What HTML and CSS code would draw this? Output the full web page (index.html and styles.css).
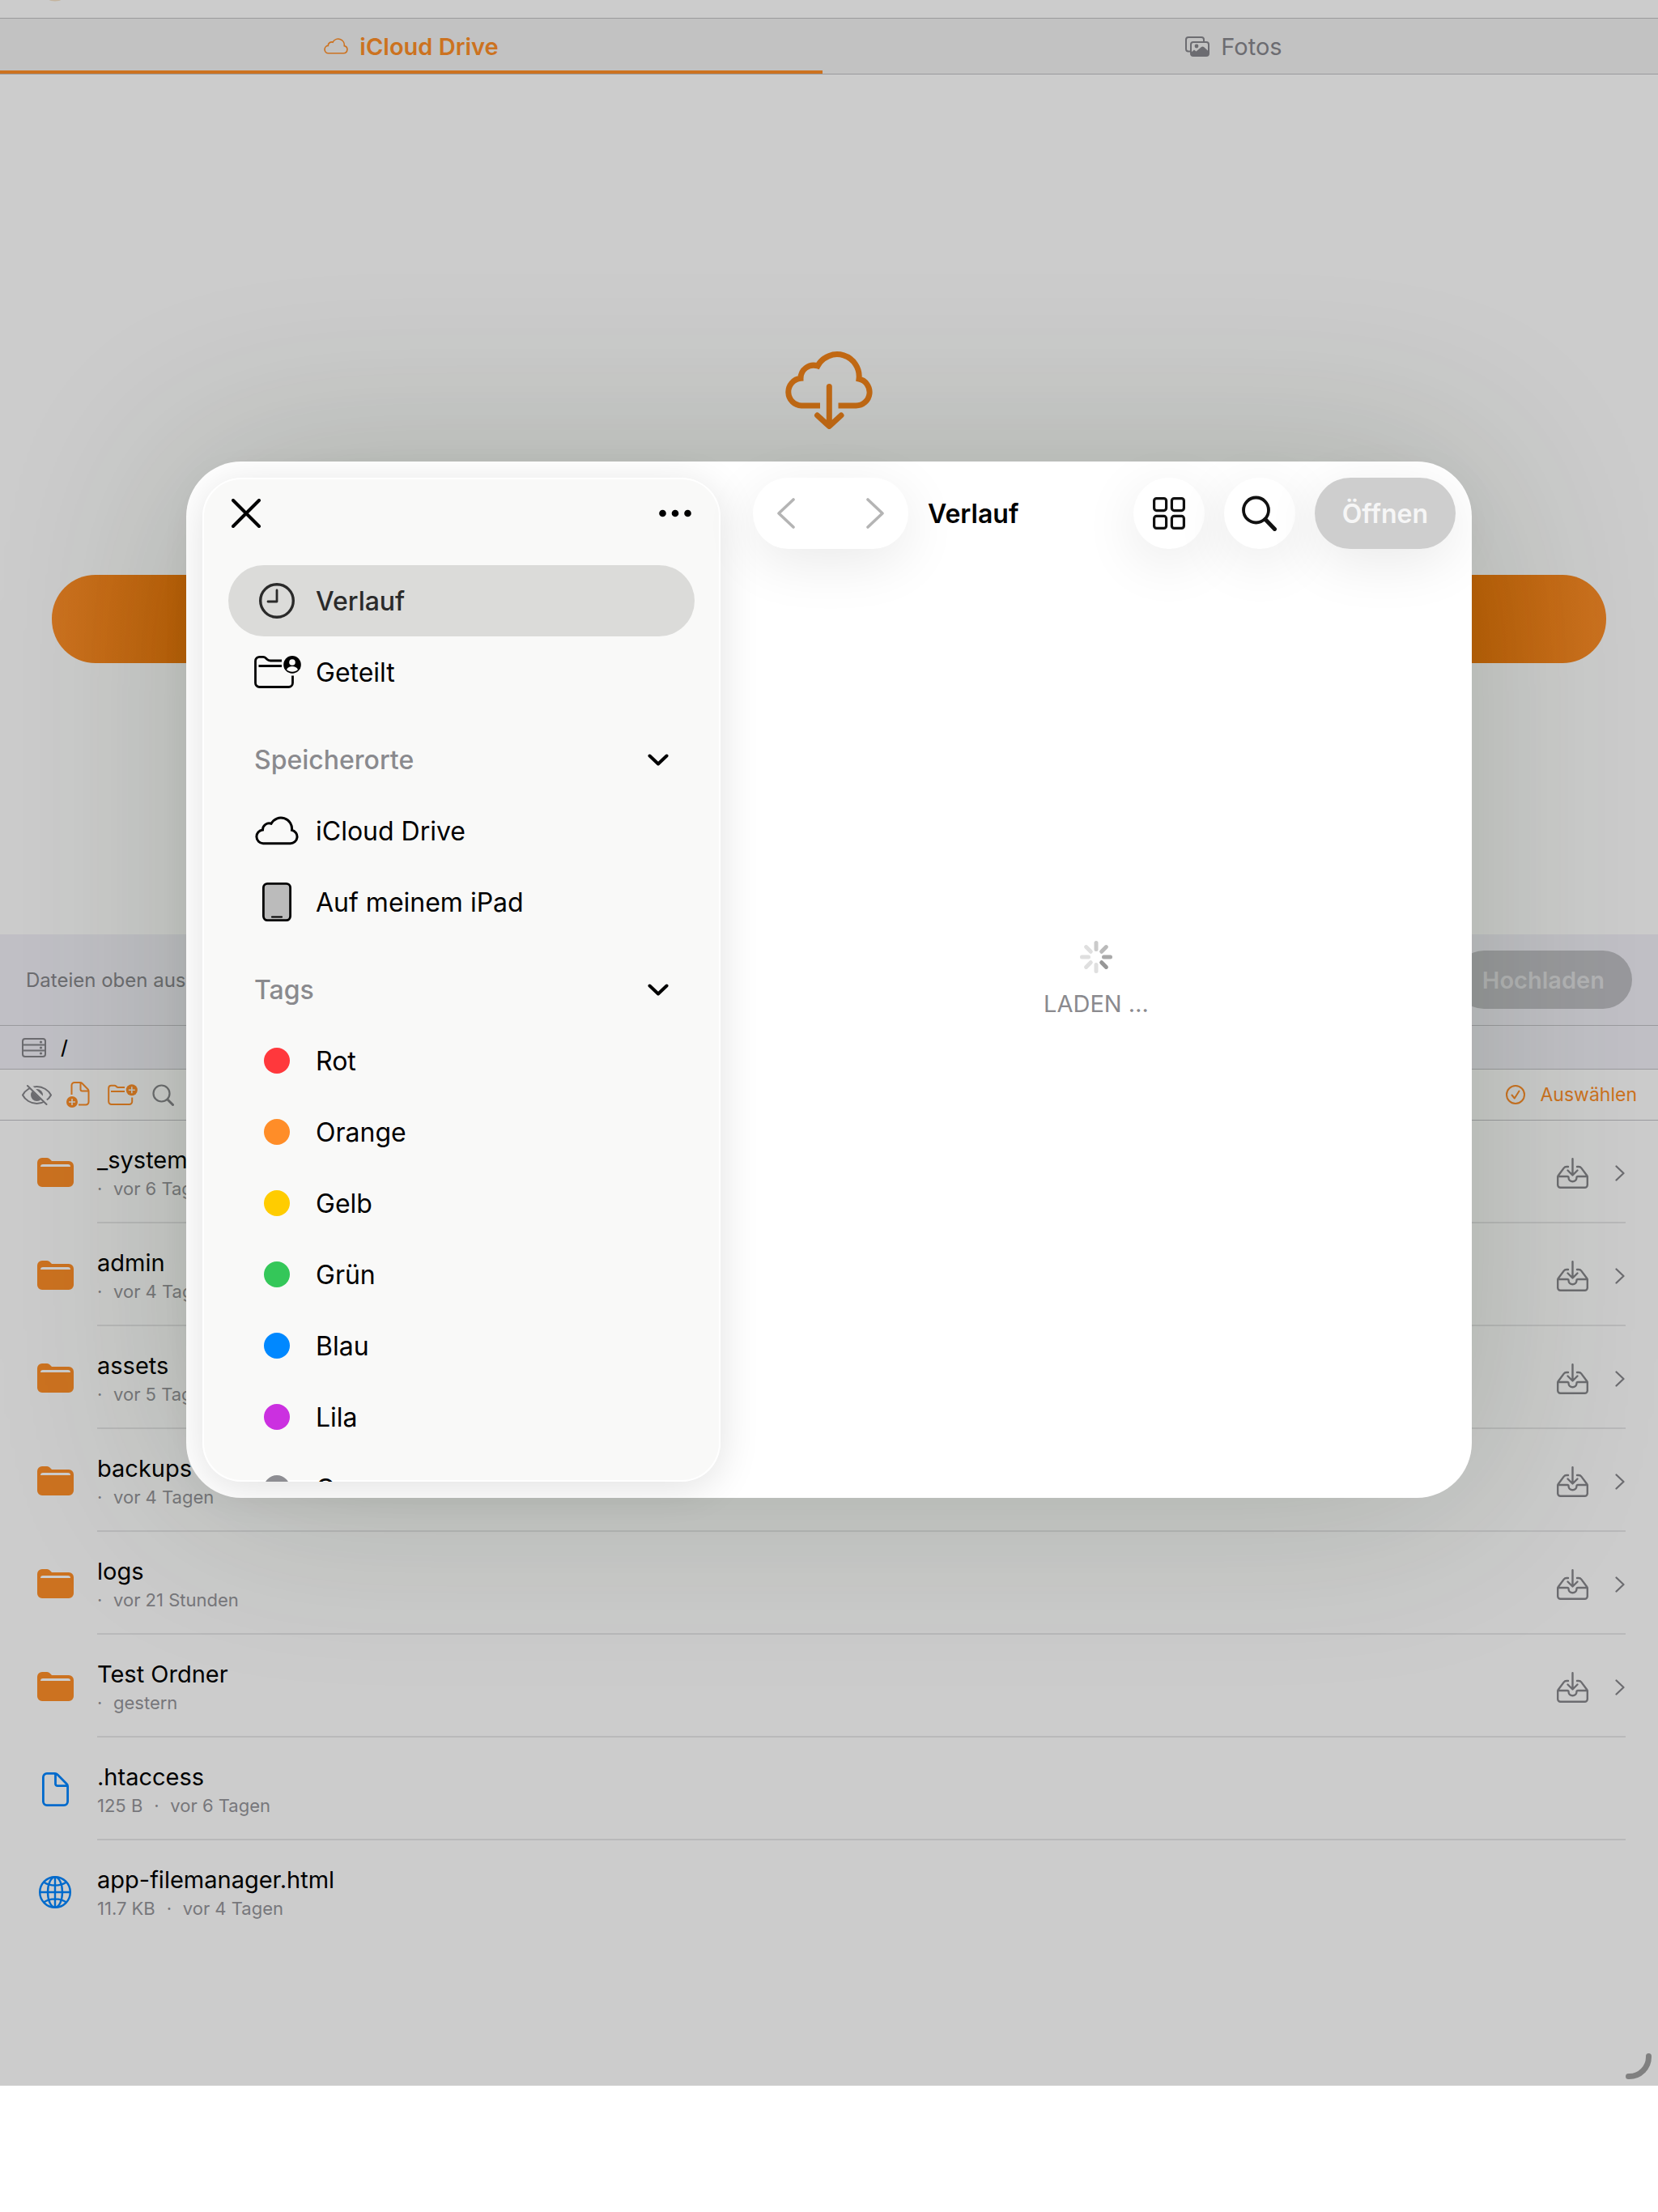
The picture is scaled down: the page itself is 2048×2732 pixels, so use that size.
FILE: index.html
```html
<!DOCTYPE html>
<html lang="de">
<head>
    <meta charset="UTF-8">
    <meta name="viewport" content="width=device-width, initial-scale=1.0">
    <title>Dateimanager</title>
    <link rel="stylesheet" href="styles.css">
</head>
<body>
    <!-- Icons -->
    <svg class="sprite" aria-hidden="true">
        <symbol id="cloud" viewBox="0 0 108 71">
            <path d="M20 67A16.900 16.900 0 0 1 19 33.300A16 16 0 0 1 40 18A27.200 27.200 0 0 1 91 34A16.700 16.700 0 0 1 87 67Z" fill="none" stroke="currentColor" stroke-width="6"/>
        </symbol>
        <symbol id="folder" viewBox="0 0 45 36">
            <path fill="currentColor" fill-rule="evenodd" d="M0 6a6 6 0 0 1 6-6h6c2 0 3 1 4 2l2 2h21a6 6 0 0 1 6 6v20a6 6 0 0 1-6 6H6a6 6 0 0 1-6-6zM4 11h37c0-2-1-3-3-3H7c-2 0-3 1-3 3z"/>
        </symbol>
        <symbol id="tray" viewBox="0 0 39 38">
            <path fill="none" stroke="currentColor" stroke-width="2.400" stroke-linecap="round" stroke-linejoin="round" d="M19.500 1.200V21M13.500 15.500l6 6 6-6M14 11h-2c-1.500 0-2.500.500-3.300 1.600L1.700 22c-.4.500-.5 1-.5 1.500V33.500a3.300 3.300 0 0 0 3.300 3.300h30a3.300 3.300 0 0 0 3.300-3.300V23.500c0-.5-.1-1-.5-1.500l-7-9.400c-.8-1.100-1.800-1.600-3.300-1.600h-2M1.200 23H13c1 0 1.500.500 1.500 1.300a5 5 0 0 0 10 0c0-.8.5-1.300 1.500-1.300h11.800"/>
        </symbol>
        <symbol id="chevron-right" viewBox="0 0 12 20">
            <path fill="none" stroke="currentColor" stroke-width="2.200" stroke-linecap="round" stroke-linejoin="round" d="M1.500 1.500l9 8.500-9 8.500"/>
        </symbol>
        <symbol id="chevron-down" viewBox="0 0 26 15">
            <path fill="none" stroke="currentColor" stroke-width="4" stroke-linecap="round" stroke-linejoin="round" d="M2.500 2.500L13 12.500l10.500-10"/>
        </symbol>
    </svg>

    <div class="app">
        <header class="topbar">
            <svg width="24" height="4" viewBox="0 0 24 4"><ellipse cx="12" cy="0" rx="7" ry="1.500" fill="#c4b49e"/></svg>
        </header>

        <nav class="tabs">
            <button class="tab active">
                <svg width="30" height="20"><use href="#cloud"/></svg>
                iCloud Drive
            </button>
            <button class="tab">
                <svg width="30" height="25" viewBox="0 0 30 25">
                    <path fill="none" stroke="currentColor" stroke-width="2" d="M6 18.500H4a3 3 0 0 1-3-3V4a3 3 0 0 1 3-3h16a3 3 0 0 1 3 3v2"/>
                    <rect x="7" y="7" width="22" height="17" rx="3" fill="none" stroke="currentColor" stroke-width="2"/>
                    <circle cx="14" cy="12" r="2.400" fill="currentColor"/>
                    <path fill="currentColor" d="M7 20l4-3.500 2.500 2 6.500-5.500c1-.8 2-.8 3 0l6 5.500V22a2 2 0 0 1-2 2H9a2 2 0 0 1-2-2z"/>
                </svg>
                Fotos
            </button>
        </nav>

        <section class="picker">
            <svg width="108" height="96" viewBox="0 0 108 96">
                <g fill="none" stroke="currentColor" stroke-width="7">
                    <path d="M43 67H20A16.900 16.900 0 0 1 19 33.300A16 16 0 0 1 40 18A27.200 27.200 0 0 1 91 34A16.700 16.700 0 0 1 87 67H65.500"/>
                    <path stroke-linecap="round" stroke-linejoin="round" d="M54.300 43.500V92M39.500 79l14.800 13.500L69 79"/>
                </g>
            </svg>
            <button class="pick-button" aria-label="Dateien auswählen"></button>
        </section>

        <div class="upload-bar">
            <span>Dateien oben auswählen</span>
            <button class="upload-button" disabled>Hochladen</button>
        </div>

        <div class="path-bar">
            <svg width="30" height="24" viewBox="0 0 30 24">
                <g fill="none" stroke="currentColor" stroke-width="2">
                    <rect x="1" y="1" width="28" height="22" rx="3"/>
                    <path d="M1 8.500h28M1 15.500h28"/>
                </g>
                <g fill="currentColor"><circle cx="23.500" cy="5" r="1.600"/><circle cx="23.500" cy="12" r="1.600"/><circle cx="23.500" cy="19" r="1.600"/></g>
            </svg>
            <a href="#" class="crumb">/</a>
        </div>

        <div class="toolbar">
            <button class="tool" aria-label="Versteckte Dateien">
                <svg width="37" height="25" viewBox="0 0 37 25">
                    <mask id="slash"><rect width="37" height="25" fill="#fff"/><path d="M7.500 -1l24.500 24" stroke="#000" stroke-width="5"/></mask>
                    <g mask="url(#slash)">
                        <path fill="none" stroke="currentColor" stroke-width="2" d="M1 12.500C4 6.500 11 2 18.500 2S33 6.500 36 12.500C33 18.500 26 23 18.500 23S4 18.500 1 12.500z"/>
                        <circle cx="18.500" cy="12.500" r="7.500" fill="currentColor"/>
                    </g>
                    <path d="M7 1l23.500 23" stroke="currentColor" stroke-width="2" stroke-linecap="round"/>
                </svg>
            </button>
            <button class="tool accent" aria-label="Neue Datei">
                <svg width="33" height="32" viewBox="0 0 33 32">
                    <path fill="none" stroke="currentColor" stroke-width="2" d="M6.500 16V4.500a3.500 3.500 0 0 1 3.500-3.500h7c1 0 1.700.300 2.400 1l7.100 7.300c.7.700 1 1.400 1 2.400V25a3.500 3.500 0 0 1-3.500 3.500h-9M17.500 1v8.500a2 2 0 0 0 2 2h8"/>
                    <circle cx="7" cy="25" r="7" fill="currentColor"/>
                    <path d="M7 21v8M3 25h8" stroke="#c6c6c5" stroke-width="1.600"/>
                </svg>
            </button>
            <button class="tool accent" aria-label="Neuer Ordner">
                <svg width="37" height="26" viewBox="0 0 37 26">
                    <path fill="none" stroke="currentColor" stroke-width="2" d="M21 4h-8c-1 0-1.500-.3-2.200-1S9.500 1.800 8.500 1.800H4.500A3.300 3.300 0 0 0 1.200 5v16.500a3.500 3.500 0 0 0 3.500 3.500h22a3.500 3.500 0 0 0 3.500-3.500V16.500M4 9h17"/>
                    <circle cx="29.800" cy="7.200" r="7" fill="currentColor"/>
                    <path d="M29.800 3.200v8M25.800 7.200h8" stroke="#c4c5c3" stroke-width="1.600"/>
                </svg>
            </button>
            <button class="tool" aria-label="Suchen">
                <svg width="27" height="27" viewBox="0 0 27 27">
                    <circle cx="11.500" cy="11.500" r="10" fill="none" stroke="currentColor" stroke-width="2.200"/>
                    <path d="M19 19l6.500 6.500" stroke="currentColor" stroke-width="3" stroke-linecap="round"/>
                </svg>
            </button>
            <button class="select-button">
                <svg width="24" height="24" viewBox="0 0 24 24">
                    <g fill="none" stroke="currentColor" stroke-width="2" stroke-linecap="round" stroke-linejoin="round"><circle cx="12" cy="12" r="11"/><path d="M7.500 12.500l3.300 4L16.500 7.500"/></g>
                </svg>
                Auswählen
            </button>
        </div>

        <ul class="files">
            <li class="file">
                <span class="file-icon"><svg width="45" height="36"><use href="#folder"/></svg></span>
                <div class="file-body">
                    <div class="file-text"><span class="file-name">_system</span><span class="file-meta"><i>·</i><span>vor 6 Tagen</span></span></div>
                    <button class="tool" aria-label="_system herunterladen"><svg width="39" height="38"><use href="#tray"/></svg></button>
                    <svg class="more" width="12" height="20"><use href="#chevron-right"/></svg>
                </div>
            </li>
            <li class="file">
                <span class="file-icon"><svg width="45" height="36"><use href="#folder"/></svg></span>
                <div class="file-body">
                    <div class="file-text"><span class="file-name">admin</span><span class="file-meta"><i>·</i><span>vor 4 Tagen</span></span></div>
                    <button class="tool" aria-label="admin herunterladen"><svg width="39" height="38"><use href="#tray"/></svg></button>
                    <svg class="more" width="12" height="20"><use href="#chevron-right"/></svg>
                </div>
            </li>
            <li class="file">
                <span class="file-icon"><svg width="45" height="36"><use href="#folder"/></svg></span>
                <div class="file-body">
                    <div class="file-text"><span class="file-name">assets</span><span class="file-meta"><i>·</i><span>vor 5 Tagen</span></span></div>
                    <button class="tool" aria-label="assets herunterladen"><svg width="39" height="38"><use href="#tray"/></svg></button>
                    <svg class="more" width="12" height="20"><use href="#chevron-right"/></svg>
                </div>
            </li>
            <li class="file">
                <span class="file-icon"><svg width="45" height="36"><use href="#folder"/></svg></span>
                <div class="file-body">
                    <div class="file-text"><span class="file-name">backups</span><span class="file-meta"><i>·</i><span>vor 4 Tagen</span></span></div>
                    <button class="tool" aria-label="backups herunterladen"><svg width="39" height="38"><use href="#tray"/></svg></button>
                    <svg class="more" width="12" height="20"><use href="#chevron-right"/></svg>
                </div>
            </li>
            <li class="file">
                <span class="file-icon"><svg width="45" height="36"><use href="#folder"/></svg></span>
                <div class="file-body">
                    <div class="file-text"><span class="file-name">logs</span><span class="file-meta"><i>·</i><span>vor 21 Stunden</span></span></div>
                    <button class="tool" aria-label="logs herunterladen"><svg width="39" height="38"><use href="#tray"/></svg></button>
                    <svg class="more" width="12" height="20"><use href="#chevron-right"/></svg>
                </div>
            </li>
            <li class="file">
                <span class="file-icon"><svg width="45" height="36"><use href="#folder"/></svg></span>
                <div class="file-body">
                    <div class="file-text"><span class="file-name">Test Ordner</span><span class="file-meta"><i>·</i><span>gestern</span></span></div>
                    <button class="tool" aria-label="Test Ordner herunterladen"><svg width="39" height="38"><use href="#tray"/></svg></button>
                    <svg class="more" width="12" height="20"><use href="#chevron-right"/></svg>
                </div>
            </li>
            <li class="file">
                <span class="file-icon blue">
                    <svg width="33" height="42" viewBox="0 0 33 42">
                        <path fill="none" stroke="currentColor" stroke-width="2.800" stroke-linejoin="round" d="M1.400 5.900a4.500 4.500 0 0 1 4.500-4.500h10c1.300 0 2.200.400 3.100 1.300l11.300 11.500c.9.900 1.300 1.800 1.300 3.100v18.800a4.500 4.500 0 0 1-4.500 4.500H5.900a4.500 4.500 0 0 1-4.500-4.500zM16.500 1.400v12.800a2.500 2.500 0 0 0 2.500 2.500h12.500"/>
                    </svg>
                </span>
                <div class="file-body">
                    <div class="file-text"><span class="file-name">.htaccess</span><span class="file-meta"><span>125 B</span><i>·</i><span>vor 6 Tagen</span></span></div>
                </div>
            </li>
            <li class="file">
                <span class="file-icon blue">
                    <svg width="40" height="40" viewBox="0 0 40 40">
                        <g fill="none" stroke="currentColor" stroke-width="2.400">
                            <circle cx="20" cy="20" r="18.800"/>
                            <ellipse cx="20" cy="20" rx="9" ry="18.800"/>
                            <path d="M20 1.200v37.600M1.200 20h37.600M6 7.500c8 5.500 20 5.500 28 0M6 32.500c8-5.500 20-5.500 28 0"/>
                        </g>
                    </svg>
                </span>
                <div class="file-body">
                    <div class="file-text"><span class="file-name">app-filemanager.html</span><span class="file-meta"><span>11.7 KB</span><i>·</i><span>vor 4 Tagen</span></span></div>
                </div>
            </li>
        </ul>

        <svg class="resize-grip" width="32" height="32" viewBox="0 0 32 32">
            <path d="M28.500 3.500v1A24 24 0 0 1 4.500 28.500h-1" fill="none" stroke="#808080" stroke-width="7" stroke-linecap="round"/>
        </svg>
    </div>

    <!-- Dateiauswahl -->
    <div class="dialog" role="dialog" aria-label="Dateiauswahl">
        <aside class="sidebar">
            <div class="sidebar-head">
                <button class="tool" aria-label="Schließen">
                    <svg width="36" height="36" viewBox="0 0 36 36"><path d="M2 2l32 32M34 2L2 34" stroke="#000" stroke-width="4" stroke-linecap="round"/></svg>
                </button>
                <button class="tool" aria-label="Mehr">
                    <svg width="40" height="10" viewBox="0 0 40 10"><circle cx="4.500" cy="5" r="4.300"/><circle cx="20" cy="5" r="4.300"/><circle cx="35.500" cy="5" r="4.300"/></svg>
                </button>
            </div>
            <nav class="places">
                <button class="place selected">
                    <span class="place-icon"><svg width="44" height="44" viewBox="0 0 44 44"><circle cx="22" cy="22" r="20.300" fill="none" stroke="currentColor" stroke-width="3.400"/><path d="M22 9v14H11" fill="none" stroke="currentColor" stroke-width="2.800" stroke-linecap="round" stroke-linejoin="round"/></svg></span>
                    Verlauf
                </button>
                <button class="place">
                    <span class="place-icon">
                        <svg width="60" height="40" viewBox="-2 0 60 40">
                            <path fill="none" stroke="currentColor" stroke-width="2.800" d="M34 6H20c-2 0-3-.5-4.200-1.700L14.500 3C13.500 2 12.500 1.400 11 1.400H6.500A5 5 0 0 0 1.500 6.400v27A5 5 0 0 0 6.500 38.500h36a5 5 0 0 0 5-5V24.500M5.500 12.500H34"/>
                            <circle cx="47" cy="10.900" r="10.800" fill="currentColor"/>
                            <circle cx="47" cy="8" r="3.800" fill="#f9f9f8"/>
                            <path d="M40 17c1.500-3 4-4 7-4s5.500 1 7 4c-1.800 1.800-4.300 2.800-7 2.800s-5.200-1-7-2.800z" fill="#f9f9f8"/>
                        </svg>
                    </span>
                    Geteilt
                </button>

                <button class="group">Speicherorte <svg width="26" height="15"><use href="#chevron-down"/></svg></button>
                <button class="place">
                    <span class="place-icon"><svg width="54" height="38"><use href="#cloud"/></svg></span>
                    iCloud Drive
                </button>
                <button class="place">
                    <span class="place-icon"><svg width="36" height="48" viewBox="0 0 36 48"><rect x="1.400" y="1.400" width="33.200" height="45.200" rx="5" fill="#bbb" stroke="#000" stroke-width="2.800"/><path d="M12 42.500h12" stroke="#000" stroke-width="2.200" stroke-linecap="round"/></svg></span>
                    Auf meinem iPad
                </button>

                <button class="group">Tags <svg width="26" height="15"><use href="#chevron-down"/></svg></button>
                <button class="place"><span class="place-icon"><span class="dot red"></span></span>Rot</button>
                <button class="place"><span class="place-icon"><span class="dot orange"></span></span>Orange</button>
                <button class="place"><span class="place-icon"><span class="dot yellow"></span></span>Gelb</button>
                <button class="place"><span class="place-icon"><span class="dot green"></span></span>Grün</button>
                <button class="place"><span class="place-icon"><span class="dot azure"></span></span>Blau</button>
                <button class="place"><span class="place-icon"><span class="dot purple"></span></span>Lila</button>
                <button class="place"><span class="place-icon"><span class="dot gray"></span></span>Grau</button>
            </nav>
        </aside>

        <main class="browser">
            <header class="browser-head">
                <div class="history">
                    <button class="tool" aria-label="Zurück"><svg width="22" height="38" viewBox="0 0 22 38"><path d="M20 2L2 19l18 17" fill="none" stroke="currentColor" stroke-width="3.600" stroke-linecap="round" stroke-linejoin="round"/></svg></button>
                    <button class="tool" aria-label="Vor"><svg width="22" height="38" viewBox="0 0 22 38"><path d="M2 2l18 17L2 36" fill="none" stroke="currentColor" stroke-width="3.600" stroke-linecap="round" stroke-linejoin="round"/></svg></button>
                </div>
                <h1>Verlauf</h1>
                <div class="actions">
                    <button class="round" aria-label="Darstellung">
                        <svg width="40" height="40" viewBox="0 0 40 40"><g fill="none" stroke="#111" stroke-width="3.200"><rect x="1.600" y="1.600" width="15" height="15" rx="3"/><rect x="23.400" y="1.600" width="15" height="15" rx="3"/><rect x="1.600" y="23.400" width="15" height="15" rx="3"/><rect x="23.400" y="23.400" width="15" height="15" rx="3"/></g></svg>
                    </button>
                    <button class="round" aria-label="Suchen">
                        <svg width="43" height="44" viewBox="0 0 43 44"><circle cx="17.500" cy="18" r="15.500" fill="none" stroke="#111" stroke-width="3.800"/><path d="M29 29.500l11.500 12" stroke="#111" stroke-width="5" stroke-linecap="round"/></svg>
                    </button>
                    <button class="open-button" disabled>Öffnen</button>
                </div>
            </header>
            <div class="loading">
                <svg width="40" height="40" viewBox="-20 -20 40 40" stroke-width="5" stroke-linecap="round">
                    <path d="M0-9.500v-8" stroke="#cbcbcb"/>
                    <path d="M6.700-6.700l5.700-5.700" stroke="#bababa"/>
                    <path d="M9.500 0h8" stroke="#a9a9a9"/>
                    <path d="M6.700 6.700l5.700 5.700" stroke="#979797"/>
                    <path d="M0 9.500v8M-6.700 6.700l-5.700 5.700M-9.500 0h-8M-6.700-6.700l-5.700-5.700" stroke="#dfdfdf"/>
                </svg>
                <p>LADEN …</p>
            </div>
        </main>
    </div>
</body>
</html>
```
FILE: styles.css
```css
/* Allgemein */
* {
    box-sizing: border-box;
}

body {
    margin: 0;
    position: relative;
    background-color: #fff;
    color: #000;
    font-family: Inter, "Liberation Sans", sans-serif;
    font-size: 29px;
}

button {
    display: flex;
    align-items: center;
    padding: 0;
    border: none;
    background: none;
    color: inherit;
    font: inherit;
    text-align: left;
}

svg {
    display: block;
    flex-shrink: 0;
}

.sprite {
    position: absolute;
    width: 0;
    height: 0;
}

.app {
    position: relative;
    background-color: #ccc;
}

.topbar {
    height: 22px;
    padding-left: 56px;
}

/* Tabs */
.tabs {
    display: flex;
    height: 70px;
    padding-right: 16px;
    background-color: #c2c2c2;
    border-top: 1px solid #9a9a9c;
    border-bottom: 1px solid #9a9a9c;
}

.tab {
    flex: 1;
    justify-content: center;
    gap: 14px;
    padding-top: 4px;
    color: #6c6c71;
    border-bottom: 4px solid transparent;
}

.tab.active {
    color: #cc7220;
    font-weight: 600;
    border-bottom-color: #cc7220;
}

.picker {
    display: flex;
    flex-direction: column;
    align-items: center;
    gap: 180px;
    padding: 342px 64px 335px;
    color: #c66a14;
}

.pick-button {
    width: 100%;
    height: 109px;
    border-radius: 54px;
    background: linear-gradient(to right, #cc7220, #be6006 166px, #be6006 calc(100% - 166px), #cc7220);
}

/* Upload */
.upload-bar {
    display: flex;
    align-items: center;
    justify-content: space-between;
    height: 113px;
    padding: 0 32px;
    background-color: #c1c0c6;
    border-bottom: 1px solid #9b9b9f;
    color: #6c6c70;
    font-size: 24px;
}

.upload-button {
    height: 72px;
    padding: 0 34px;
    border-radius: 36px;
    background-color: #99999d;
    color: #b3b3b5;
    font-size: 29px;
    font-weight: 600;
}

.path-bar {
    display: flex;
    align-items: center;
    gap: 18px;
    height: 54px;
    padding: 0 27px;
    background-color: #c1c0c6;
    border-bottom: 1px solid #9b9b9f;
    color: #6c6c70;
}

.crumb {
    color: #000;
    font-size: 24px;
    font-weight: 500;
    text-decoration: none;
}

.toolbar {
    display: flex;
    align-items: center;
    gap: 18px;
    height: 63px;
    padding: 0 26px 0 27px;
    border-bottom: 1px solid #9b9b9f;
    color: #6c6c70;
}

.accent {
    color: #cc7220;
}

.select-button {
    gap: 18px;
    margin-left: auto;
    color: #cc7220;
    font-size: 23px;
}

/* Dateiliste */
.files {
    margin: 0;
    padding: 0 40px 176px;
    list-style: none;
}

.file {
    display: flex;
    gap: 24px;
    height: 127px;
}

.file-icon {
    display: flex;
    align-items: center;
    justify-content: center;
    width: 56px;
    color: #cc7220;
}

.file-icon.blue {
    color: #006acc;
}

.file-body {
    flex: 1;
    display: flex;
    align-items: center;
    padding-top: 4px;
    border-bottom: 2px solid #b9b9ba;
}

.file:last-child .file-body {
    border-bottom-color: transparent;
}

.file-body .tool,
.more {
    color: #6c6c70;
}

.more {
    margin-left: 33px;
    margin-right: 1px;
}

.file-text {
    flex: 1;
    display: flex;
    flex-direction: column;
}

.file-name {
    line-height: 38px;
}

.file-meta {
    display: flex;
    gap: 14px;
    color: #77777b;
    font-size: 22px;
    line-height: 32px;
}

.file-meta i {
    width: 6px;
    font-style: normal;
}

.resize-grip {
    position: absolute;
    right: 8px;
    bottom: 8px;
}

/* Dialog */
.dialog {
    position: absolute;
    top: 570px;
    left: 230px;
    right: 230px;
    height: 1280px;
    display: flex;
    padding: 20px;
    border-radius: 68px;
    background-color: #fff;
    box-shadow: 0 0 240px rgba(30, 55, 20, 0.2);
    font-size: 32px;
}

.sidebar {
    width: 640px;
    padding: 0 32px;
    border-radius: 48px;
    overflow: hidden;
    background-color: #f9f9f8;
    box-shadow: inset 0 0 0 2px #fff, 0 8px 50px rgba(0, 0, 0, 0.12);
}

.sidebar-head {
    display: flex;
    align-items: center;
    justify-content: space-between;
    height: 88px;
    margin-bottom: 20px;
    padding: 0 4px;
}

.place {
    width: 100%;
    height: 88px;
    gap: 20px;
    padding: 0 32px;
    border-radius: 44px;
}

.place.selected {
    background-color: #dbdbd9;
    color: #2a2a2a;
    font-weight: 500;
}

.place-icon {
    display: flex;
    align-items: center;
    justify-content: center;
    width: 56px;
}

.group {
    justify-content: space-between;
    width: 100%;
    height: 88px;
    margin-top: 20px;
    padding: 0 32px;
    color: #8a8a8e;
    font-weight: 500;
}

.group svg {
    color: #000;
}

.dot {
    width: 32px;
    height: 32px;
    border-radius: 50%;
}

.red { background-color: #ff383c; }
.orange { background-color: #ff8d28; }
.yellow { background-color: #ffcc00; }
.green { background-color: #34c759; }
.azure { background-color: #0088ff; }
.purple { background-color: #cb30e0; }
.gray { background-color: #8e8e93; }

.browser {
    flex: 1;
    display: flex;
    flex-direction: column;
}

.browser-head {
    display: flex;
    align-items: center;
    padding-left: 40px;
}

.history,
.round,
.open-button {
    height: 88px;
    border-radius: 44px;
    background-color: #fff;
    box-shadow: 0 16px 70px rgba(0, 0, 0, 0.09);
}

.history {
    display: flex;
    justify-content: space-between;
    width: 192px;
    padding: 0 30px;
    color: #b4b4b4;
}

h1 {
    margin: 0 0 0 24px;
    font-size: 32px;
    font-weight: 600;
}

.actions {
    display: flex;
    gap: 24px;
    margin-left: auto;
}

.round {
    justify-content: center;
    width: 88px;
}

.open-button {
    padding: 0 34px;
    background-color: #cecece;
    color: #f6f6f6;
    font-weight: 600;
}

.loading {
    flex: 1;
    display: flex;
    flex-direction: column;
    align-items: center;
    padding: 484px 0 0 20px;
    color: #8a8a8e;
}

.loading p {
    margin: 20px 0 0;
    font-size: 29px;
}
```
